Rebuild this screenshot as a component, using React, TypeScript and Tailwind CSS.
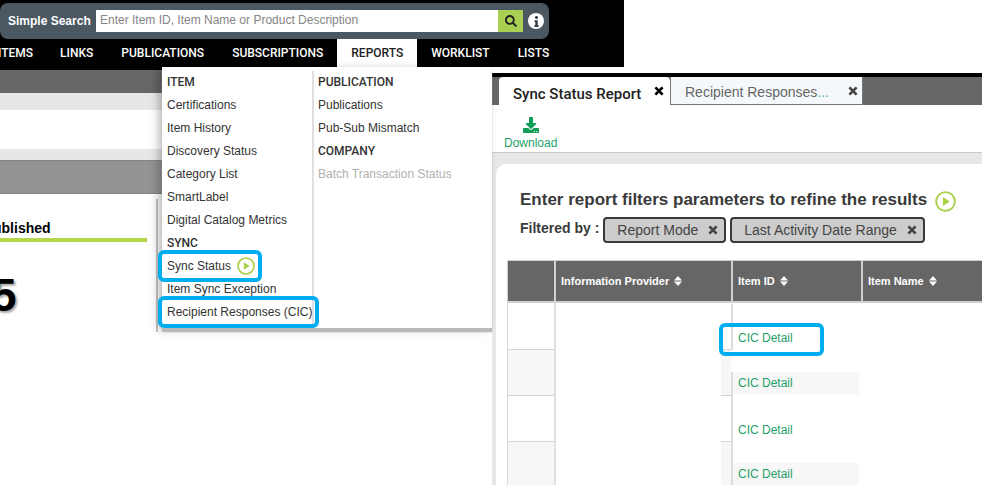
import type { ReactNode } from 'react'
import { FaDownload, FaInfo, FaSearch } from 'react-icons/fa'

const itemLinks = [
  'Certifications',
  'Item History',
  'Discovery Status',
  'Category List',
  'SmartLabel',
  'Digital Catalog Metrics',
]

const rows = [
  { striped: false, box: true },
  { striped: true, box: false },
  { striped: false, box: false },
  { striped: true, box: false },
]

function PlayIcon({ className }: { className: string }) {
  return (
    <svg viewBox="0 0 20 20" className={className} aria-hidden="true">
      <circle cx="10" cy="10" r="8.9" fill="#fff" stroke="#a9cf46" strokeWidth="1.8" />
      <path d="M7.6 5.8 14 10l-6.4 4.2z" fill="#a9cf46" />
    </svg>
  )
}

function CloseIcon() {
  return (
    <svg viewBox="0 0 10 10" className="size-[10px]" aria-hidden="true">
      <path d="M1.4 1.4 8.6 8.6M8.6 1.4 1.4 8.6" stroke="currentColor" strokeWidth="2.7" />
    </svg>
  )
}

function SortIcon() {
  return (
    <svg viewBox="0 0 8 10" className="h-[10px] w-2" fill="#fff" aria-hidden="true">
      <path d="M4 0 8 4.4H0zM4 10 0 5.6h8z" />
    </svg>
  )
}

function NavLink({ children }: { children: ReactNode }) {
  return (
    <a href="#" className="px-[14px] py-[6px] text-white">
      {children}
    </a>
  )
}

function Header() {
  return (
    <header className="w-5/8 bg-black pt-[3px]">
      <form className="flex h-9 w-[88%] items-center rounded-[8px] bg-[#4b5861] pl-2">
        <label htmlFor="search" className="w-[88px] shrink-0 text-[12px] font-bold text-white">
          Simple Search
        </label>
        <input
          id="search"
          type="text"
          placeholder="Enter Item ID, Item Name or Product Description"
          className="h-[22px] min-w-0 flex-1 bg-white px-1 pb-[2px] text-[12px] placeholder:text-[#858585]"
        />
        <button
          type="button"
          aria-label="Search"
          className="flex h-[22px] w-[25px] items-center justify-center bg-[#a9cf53] text-[#222]"
        >
          <FaSearch size={12} />
        </button>
        <button
          type="button"
          aria-label="Help"
          className="mx-[5px] flex size-4 items-center justify-center rounded-full bg-white text-[#333d45]"
        >
          <FaInfo size={11} />
        </button>
      </form>
      <nav className="flex h-7 items-center font-[Roboto,sans-serif] text-[12px] leading-[18px] font-medium">
        <a href="#" className="-ml-[2px] pr-[13px] text-white">
          ITEMS
        </a>
        <NavLink>LINKS</NavLink>
        <NavLink>PUBLICATIONS</NavLink>
        <NavLink>SUBSCRIPTIONS</NavLink>
        <a href="#" className="flex h-full items-center bg-white px-[14px] text-[#222]">
          REPORTS
        </a>
        <NavLink>WORKLIST</NavLink>
        <NavLink>LISTS</NavLink>
      </nav>
    </header>
  )
}

function Highlight() {
  return (
    <span className="pointer-events-none absolute -inset-y-[5px] -right-[7px] -left-[9px] rounded-[6px] border-4 border-[#00aeef]" />
  )
}

function ReportsMenu() {
  return (
    <div className="absolute top-0 right-0 left-[162px] flex h-[261px] bg-white pt-1 text-[12px] leading-[23px] text-[#333] shadow-[0_4px_1px_#b9b9b9,-4px_2px_8px_rgba(0,0,0,0.25)]">
      <ul className="w-[150px] shrink-0 pl-[5px] whitespace-nowrap">
        <li className="font-[Roboto,sans-serif] font-medium">ITEM</li>
        {itemLinks.map((name) => (
          <li key={name}>
            <a href="#">{name}</a>
          </li>
        ))}
        <li className="font-[Roboto,sans-serif] font-medium">SYNC</li>
        <li className="flex h-[23px]">
          <a href="#" className="relative flex h-[22px] items-center gap-[6px] leading-[22px]">
            Sync Status
            <PlayIcon className="size-[18px]" />
            <Highlight />
          </a>
        </li>
        <li>
          <a href="#">Item Sync Exception</a>
        </li>
        <li className="flex h-[23px]">
          <a href="#" className="relative block h-[22px] leading-[22px]">
            Recipient Responses (CIC)
            <Highlight />
          </a>
        </li>
      </ul>
      <ul className="flex-1 border-l-2 border-[#e0e0e0] pl-1 whitespace-nowrap">
        <li className="font-[Roboto,sans-serif] font-medium">PUBLICATION</li>
        <li>
          <a href="#">Publications</a>
        </li>
        <li>
          <a href="#">Pub-Sub Mismatch</a>
        </li>
        <li className="font-[Roboto,sans-serif] font-medium">COMPANY</li>
        <li className="text-[#b0b0b0]">Batch Transaction Status</li>
      </ul>
    </div>
  )
}

function Dashboard() {
  return (
    <section className="relative w-[492px] shrink-0">
      <div className="w-[162px]">
        <div className="h-[3px] bg-black" />
        <div className="h-[23px] bg-[#666]" />
        <div className="h-[17px] bg-[#e7e7e7]" />
        <div className="h-[39px]" />
        <div className="h-[11px] bg-[#e7e7e7]" />
        <div className="h-[34px] border-y border-[#858383] bg-[#949292]" />
        <div className="mt-[5px] mr-1 h-[133px] border-r-2 border-[#c4c4c4] pt-[20px] pr-[9px] text-black">
          <h2 className="-ml-[7px] border-b-4 border-[#b5d54a] pb-[1px] text-[14px] leading-[18px] font-bold">
            ublished
          </h2>
          <p className="-ml-[9px] pt-[28px] text-[46px] leading-[50px] font-bold [text-shadow:2px_2px_2px_#aaa]">
            5
          </p>
        </div>
      </div>
      <ReportsMenu />
    </section>
  )
}

function Chip({ name }: { name: string }) {
  return (
    <span className="flex h-[26px] items-center gap-[10px] rounded-[4px] border-2 border-[#3a3a3a] bg-[#ccc] pr-[6px] pl-3 text-[14px] whitespace-nowrap text-[#444]">
      {name}
      <button type="button" aria-label={`Remove ${name}`}>
        <CloseIcon />
      </button>
    </span>
  )
}

function HeadCell({ children }: { children: ReactNode }) {
  return (
    <th className="border-l-2 border-[#d0d0d0] bg-[#666] pl-[5px] text-left font-bold text-white">
      <span className="flex items-center gap-[5px]">
        {children}
        <SortIcon />
      </span>
    </th>
  )
}

function ResultsTable() {
  return (
    <table className="w-full table-fixed border-separate border-spacing-0 text-[12px]">
      <colgroup>
        <col className="w-[47px]" />
        <col className="w-[177px]" />
        <col className="w-[130px]" />
        <col />
      </colgroup>
      <thead>
        <tr className="h-[43px] text-[11px] [&>th]:border-t [&>th]:border-b-2">
          <th className="border-l border-[#d0d0d0] bg-[#666]" />
          <HeadCell>Information Provider</HeadCell>
          <HeadCell>Item ID</HeadCell>
          <HeadCell>Item Name</HeadCell>
        </tr>
      </thead>
      <tbody>
        {rows.map((row, i) => (
          <tr key={i}>
            <td
              className={`border-l border-l-[#d8d8d8] p-0 ${i < 3 ? 'border-b border-b-[#d4d4d4]' : ''} ${row.striped ? 'bg-[#f7f7f7]' : ''}`}
            />
            <td className="border-l-2 border-[#e0e0e0] p-0">
              <div
                className={`ml-auto w-[10px] ${i < 3 ? 'border-b border-[#d4d4d4]' : 'h-[43px]'} ${row.striped ? 'bg-[#f7f7f7]' : ''} ${i === 0 ? 'h-[47px]' : ''} ${i === 1 || i === 2 ? 'h-[46px]' : ''}`}
              />
            </td>
            <td className="p-0 align-bottom">
              <div
                className={`flex border-l-2 border-[#dcdcdc] ${i === 1 ? 'h-6 items-start' : 'items-end'} ${i === 0 || i === 2 ? 'h-[46px] pb-px' : ''} ${i === 3 ? 'h-[43px]' : ''}`}
              >
                <div
                  className={`mr-[2px] h-[22px] flex-1 pl-[5px] leading-[22px] ${row.striped ? 'bg-[#f7f7f7]' : ''}`}
                >
                  <a href="#" className="relative inline-block text-[#1f9f68]">
                    CIC Detail
                    {row.box && (
                      <span className="pointer-events-none absolute -top-[4px] -left-[19px] h-[33px] w-[105px] rounded-[6px] border-4 border-[#00aeef]" />
                    )}
                  </a>
                </div>
              </div>
            </td>
            <td />
          </tr>
        ))}
      </tbody>
    </table>
  )
}

function ReportWindow() {
  return (
    <section className="mt-[6px] mr-[17px] min-w-0 flex-1">
      <div className="flex h-8 border-t-4 border-black bg-[#666] pl-[7px] text-[14px]">
        <div className="flex w-[171px] items-center justify-between rounded-t-[4px] bg-white pr-[6px] pl-[14px] whitespace-nowrap text-[#222]">
          <button type="button" className="pt-[6px] font-[Roboto,sans-serif] text-[15px] font-medium">
            Sync Status Report
          </button>
          <button type="button" aria-label="Close Sync Status Report" className="text-black">
            <CloseIcon />
          </button>
        </div>
        <div className="flex w-[193px] items-center justify-between border border-t-0 border-[#777] bg-[#f5f8fa] pr-1 pl-[14px] whitespace-nowrap text-[#666]">
          <button type="button" className="pt-[3px]">
            Recipient Responses<span className="text-[#4cb8a0]">...</span>
          </button>
          <button type="button" aria-label="Close Recipient Responses" className="text-[#444]">
            <CloseIcon />
          </button>
        </div>
      </div>
      <div className="h-12 border-b border-[#c8c8c8] pt-3 pl-3">
        <button type="button" className="flex flex-col items-center gap-[2px] text-[12px] leading-4 text-[#1f9f68]">
          <FaDownload size={16} className="text-[#0f9d58]" />
          Download
        </button>
      </div>
      <div className="bg-[#e7e7e7] pt-[11px] pl-1">
        <div className="rounded-tl-[10px] bg-white pt-[24px] pl-[11px]">
          <div className="pl-[13px] text-[#3a3a3a]">
            <h1 className="flex h-[23px] items-center gap-2 text-[17px] font-bold whitespace-nowrap">
              Enter report filters parameters to refine the results
              <PlayIcon className="mt-[4px] size-[21px]" />
            </h1>
            <div className="mt-[6px] flex gap-1">
              <span className="text-[14px] leading-[22px] font-bold whitespace-nowrap">Filtered by :</span>
              <Chip name="Report Mode" />
              <Chip name="Last Activity Date Range" />
            </div>
          </div>
          <div className="pt-[17px]">
            <ResultsTable />
          </div>
        </div>
      </div>
    </section>
  )
}

export default function App() {
  return (
    <div className="bg-white font-['Liberation_Sans',Arial,sans-serif]">
      <Header />
      <main className="flex">
        <Dashboard />
        <ReportWindow />
      </main>
    </div>
  )
}
